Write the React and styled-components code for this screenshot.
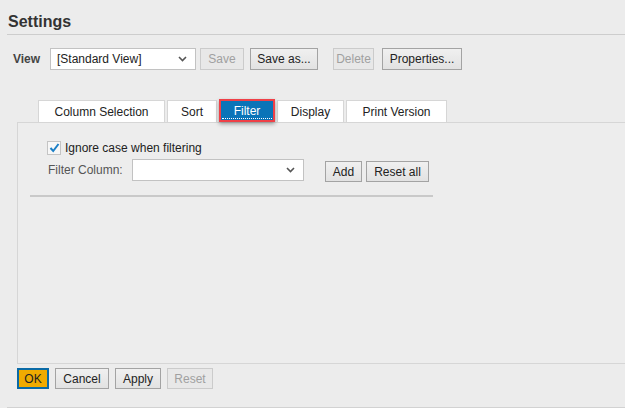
import React from 'react';
import styled, { createGlobalStyle } from 'styled-components';

const GlobalStyle = createGlobalStyle`
  html, body {
    margin: 0;
    padding: 0;
    background: #ececec;
  }
  body {
    font-family: "Liberation Sans", Arial, sans-serif;
    font-size: 12px;
    color: #333;
  }
`;

const Page = styled.div`
  width: 625px;
  height: 408px;
  overflow: hidden;
  display: flex;
  flex-direction: column;
`;

const Header = styled.div`
  margin-left: 7px;
  padding: 13px 0 3px 1px;
  font-size: 16px;
  line-height: 18px;
  font-weight: bold;
  color: #333;
  border-bottom: 1px solid #cdcdcd;
`;

const ViewRow = styled.div`
  display: flex;
  align-items: center;
  margin-top: 13px;
  padding-left: 13px;
  height: 22px;
`;

const ViewLabel = styled.span`
  font-weight: bold;
  color: #444;
  width: 37px;
`;

const Select = styled.div`
  box-sizing: border-box;
  width: ${p => p.$w}px;
  height: 22px;
  background: #fff;
  border: 1px solid #c2c2c2;
  display: flex;
  align-items: center;
  justify-content: space-between;
  padding: 0 8px 0 6px;
  color: #222;
`;

const Chevron = () => (
  <svg width="9" height="6" viewBox="0 0 9 6">
    <path d="M1 1 L4.5 4.5 L8 1" fill="none" stroke="#555" strokeWidth="1.6" />
  </svg>
);

const Button = styled.button`
  box-sizing: border-box;
  height: ${p => p.$h || 21}px;
  width: ${p => p.$w}px;
  flex: none;
  margin-left: ${p => p.$ml || 0}px;
  margin-top: ${p => p.$mt || 0}px;
  padding: 0;
  font-family: inherit;
  font-size: 12px;
  white-space: nowrap;
  color: ${p => (p.disabled ? '#a0a0a0' : '#222')};
  background: ${p => (p.disabled ? '#e8e8e8' : 'linear-gradient(#f0f0f0, #e2e2e2)')};
  border: 1px solid ${p => (p.disabled ? '#cbcbcb' : '#a3a3a3')};
  border-radius: 0;
`;

const PrimaryButton = styled(Button)`
  background: #f0ab00;
  border: 2px solid #0a6aa6;
  color: #222;
`;

const TabRow = styled.div`
  display: flex;
  align-items: flex-end;
  margin-top: 29px;
  padding-left: 38px;
  height: 23px;
  gap: 2px;
`;

const Tab = styled.div`
  box-sizing: border-box;
  width: ${p => p.$w}px;
  height: 22px;
  background: #fff;
  border: 1px solid #d6d6d6;
  border-bottom: none;
  display: flex;
  align-items: center;
  justify-content: center;
  color: #222;
`;

const ActiveTab = styled.div`
  position: relative;
  box-sizing: border-box;
  width: ${p => p.$w}px;
  height: 23px;
  background: #0a74b8;
  border: 2px solid #ef4047;
  box-shadow: 0 2px 4px rgba(0, 0, 0, 0.35);
  display: flex;
  align-items: center;
  justify-content: center;
  color: #fff;
  z-index: 1;

  &::after {
    content: '';
    position: absolute;
    left: 1px;
    right: 1px;
    bottom: 1px;
    border-bottom: 1px dotted #fff;
  }
`;

const Panel = styled.div`
  box-sizing: border-box;
  margin-left: 17px;
  height: 242px;
  border: 1px solid #d6d6d6;
  border-right: none;
  background: #ededed;
  padding: 18px 0 0 29px;
  display: flex;
  flex-direction: column;
`;

const CheckRow = styled.label`
  display: flex;
  align-items: center;
  height: 14px;
  color: #222;
`;

const Box = styled.span`
  box-sizing: border-box;
  width: 14px;
  height: 14px;
  border: 1px solid #c4c4c4;
  background: #f7f7f7;
  display: flex;
  align-items: center;
  justify-content: center;
  margin-right: 4px;
`;

const FilterRow = styled.div`
  display: flex;
  align-items: flex-start;
  margin-top: 4px;
  height: 23px;
`;

const FieldLabel = styled.span`
  width: 84px;
  padding-left: 1px;
  line-height: 22px;
  color: #555;
`;

const Separator = styled.div`
  margin: 13px 0 0 -17px;
  width: 403px;
  height: 2px;
  background: #c9c9c9;
`;

const FooterRow = styled.div`
  display: flex;
  margin-top: 4px;
  padding-left: 17px;
  gap: 6px;
`;

const BottomRule = styled.div`
  margin: 18px 0 0 7px;
  border-top: 1px solid #d2d2d2;
`;

export default function App() {
  return (
    <Page>
      <GlobalStyle />
      <Header>Settings</Header>
      <ViewRow>
        <ViewLabel>View</ViewLabel>
        <Select $w={146}>
          <span>[Standard View]</span>
          <Chevron />
        </Select>
        <Button $h={22} $w={44} $ml={4} disabled>Save</Button>
        <Button $h={22} $w={68} $ml={6}>Save as...</Button>
        <Button $h={22} $w={41} $ml={15} disabled>Delete</Button>
        <Button $h={22} $w={80} $ml={8}>Properties...</Button>
      </ViewRow>
      <TabRow>
        <Tab $w={127}>Column Selection</Tab>
        <Tab $w={50}>Sort</Tab>
        <ActiveTab $w={56}>Filter</ActiveTab>
        <Tab $w={67}>Display</Tab>
        <Tab $w={101}>Print Version</Tab>
      </TabRow>
      <Panel>
        <CheckRow>
          <Box>
            <svg width="11" height="10" viewBox="0 0 11 10">
              <path d="M1.5 5 L4.2 8 L9.5 1" fill="none" stroke="#1b7fc6" strokeWidth="2" />
            </svg>
          </Box>
          Ignore case when filtering
        </CheckRow>
        <FilterRow>
          <FieldLabel>Filter Column:</FieldLabel>
          <Select $w={172}>
            <span />
            <Chevron />
          </Select>
          <Button $w={37} $ml={21} $mt={2}>Add</Button>
          <Button $w={63} $ml={4} $mt={2}>Reset all</Button>
        </FilterRow>
        <Separator />
      </Panel>
      <FooterRow>
        <PrimaryButton $w={32}>OK</PrimaryButton>
        <Button $w={54}>Cancel</Button>
        <Button $w={46}>Apply</Button>
        <Button $w={46} disabled>Reset</Button>
      </FooterRow>
      <BottomRule />
    </Page>
  );
}
